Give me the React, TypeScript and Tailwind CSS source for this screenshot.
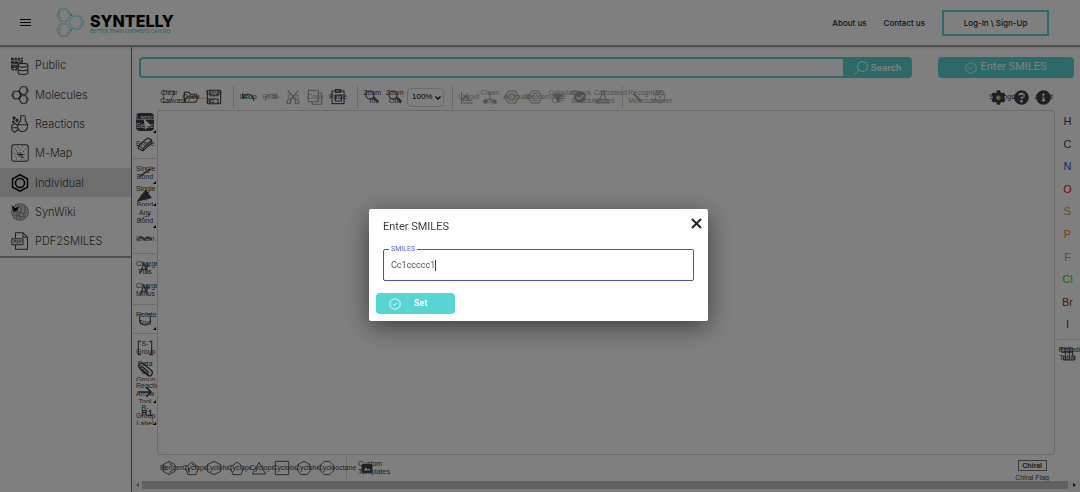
import { useState } from "react";
import type { ReactNode } from "react";
import { FaCheckCircle, FaCog, FaInfoCircle, FaQuestionCircle } from "react-icons/fa";

type ToolItem = {
    label: string;
    icon: ReactNode;
    disabled?: boolean;
    active?: boolean;
    more?: boolean;
    tall?: boolean;
};

function Svg({ children, className = "size-4" }: { children: ReactNode; className?: string }) {
    return (
        <svg viewBox="0 0 24 24" fill="none" stroke="currentColor" strokeWidth="1.6" className={className} aria-hidden="true">
            {children}
        </svg>
    );
}

const undoPath = <path d="M4 6v7h7M4 13c3-7 14-8 17 5" />;

const zoomIcon = (
    <Svg>
        <circle cx="9" cy="9" r="6" />
        <path d="M13 13l8 8M15 12l7 7" />
    </Svg>
);

const chargeIcon = (
    <Svg>
        <path d="M5 20L10 5l4 10M7 14h6M15 4v16M11 9h9" />
    </Svg>
);

const FILE_TOOLS: ToolItem[] = [
    { label: "Clear Canvas", icon: <Svg><path d="M4 3h16v4l-5 8v6M4 3v17h9" strokeWidth="1" /></Svg> },
    { label: "Open…", icon: <Svg><path d="M2 20V5h7l2 3h9v4M2 20l4-8h17l-4 8z" /></Svg> },
    { label: "Save As…", icon: <Svg><rect x="2" y="2" width="20" height="20" rx="1" /><path d="M6 2v8h12V2M6 22v-7h12v7" /></Svg> },
];

const EDIT_TOOLS: ToolItem[] = [
    { label: "Undo", icon: <Svg>{undoPath}</Svg> },
    { label: "Redo", disabled: true, icon: <Svg className="size-4 -scale-x-100">{undoPath}</Svg> },
    { label: "Cut", disabled: true, icon: <Svg><circle cx="6" cy="19" r="3" /><circle cx="18" cy="19" r="3" /><path d="M4 2l12 15M20 2L8 17" /></Svg> },
    { label: "Copy", disabled: true, icon: <Svg><rect x="2" y="2" width="15" height="17" /><path d="M8 19v4h14V6h-5" /></Svg> },
    { label: "Paste", icon: <Svg><rect x="3" y="3" width="18" height="19" /><rect x="8" y="1" width="8" height="4" /><path d="M8 9h9v9H8z" /></Svg> },
];

const ZOOM_TOOLS: ToolItem[] = [
    { label: "Zoom In", icon: zoomIcon },
    { label: "Zoom Out", icon: zoomIcon },
];

const STRUCTURE_TOOLS: ToolItem[] = [
    { label: "Layout", disabled: true, icon: <Svg><path d="M4 4v17h17M4 17l7-7 4 6M12 12V6M4 17h16" /></Svg> },
    { label: "Clean Up", disabled: true, icon: <Svg><path d="M12 5v9l-7 5M12 14l7 5" /><circle cx="5" cy="19" r="2.5" fill="currentColor" /><circle cx="19" cy="19" r="2.5" fill="currentColor" /></Svg> },
    { label: "Aromatize", disabled: true, icon: <Svg><path d="M7 3h10l6 9-6 9H7l-6-9z" /><circle cx="12" cy="12" r="5" /></Svg> },
    { label: "Dearomatize", disabled: true, icon: <Svg><path d="M7 3h10l6 9-6 9H7l-6-9zM8 7h8M8 17h8" /></Svg> },
    { label: "Calculate CIP", disabled: true, icon: <Svg><path d="M4 5l8 13 8-13" /><path d="M8 8l4 11 4-11z" fill="currentColor" /></Svg> },
    { label: "Check Structure", disabled: true, icon: <FaCheckCircle className="size-3" /> },
    { label: "Calculated Values", disabled: true, icon: <Svg><path d="M8 3h8M10 3v7L3 21h18l-7-11V3M7 16h10" /></Svg> },
];

const VIEW_TOOLS: ToolItem[] = [
    { label: "Recognize Molecule", disabled: true, icon: <Svg><path d="M7 7l11 12" strokeWidth="3" /></Svg> },
    { label: "3D Viewer", disabled: true, icon: <Svg><path d="M12 3l7 5v9l-7 4-7-4V8zM12 12v9M5 8l7 4 7-4" strokeWidth="1" /></Svg> },
];

const LEFT_GROUPS: ToolItem[][] = [
    [
        { label: "Lasso Selection", active: true, more: true, icon: <Svg><path d="M11 9l9 8-5 1-2 4z" fill="currentColor" /></Svg> },
        { label: "Erase", icon: <Svg><path d="M2 15L16 3l6 3L9 19zM9 19v3l13-12V6M2 15v4l7 3" /></Svg> },
    ],
    [
        { label: "Single Bond", more: true, icon: <Svg><path d="M4 17L20 6" strokeWidth="2" /></Svg> },
        { label: "Single Up Bond", more: true, tall: true, icon: <Svg><path d="M1 21L13 5l8 11z" fill="currentColor" /></Svg> },
        { label: "Any Bond", more: true, icon: <Svg><path d="M4 17L20 7" strokeDasharray="3 2" /></Svg> },
        { label: "Chain", icon: <Svg><path d="M1 13l5-4 5 4 5-4 6 4" strokeWidth="2" /></Svg> },
    ],
    [
        { label: "Charge Plus", icon: chargeIcon },
        { label: "Charge Minus", icon: chargeIcon },
    ],
    [
        { label: "Rotate Tool", more: true, icon: <Svg><path d="M4 8v9l6 4h4l6-4V8M4 5h5M15 5h5" /></Svg> },
    ],
    [
        { label: "S-Group", icon: <Svg><path d="M6 2H2v20h4M18 2h4v20h-4" /></Svg> },
        { label: "Data S-Group", tall: true, icon: <Svg><path d="M18 20L4 9c-4-5 2-10 6-6l12 10c3 5-2 10-6 7L6 12c-3-4 1-6 3-4l9 8" strokeWidth="2" /></Svg> },
        { label: "Reaction Arrow Tool", more: true, tall: true, icon: <Svg><path d="M2 12h19M14 5l7 7-7 7" strokeWidth="2.4" /></Svg> },
        { label: "R-Group Label Tool", more: true, tall: true, icon: <span className="pl-1 text-[9px] font-bold">R1</span> },
    ],
];

const TEMPLATES: ToolItem[] = [
    { label: "Benzene", icon: <Svg><path d="M12 2l9 5v10l-9 5-9-5V7zM6 8v8M12 5l6 4M12 19l6-4" strokeWidth="1.3" /></Svg> },
    { label: "Cyclopentadiene", icon: <Svg><path d="M12 3l10 8-4 11H6L2 11zM12 6l6 5M6 12l2 7" strokeWidth="1.3" /></Svg> },
    { label: "Cyclohexane", icon: <Svg><path d="M12 2l10 5v10l-10 5-10-5V7z" strokeWidth="1.3" /></Svg> },
    { label: "Cyclopentane", icon: <Svg><path d="M12 3l10 8-4 11H6L2 11z" strokeWidth="1.3" /></Svg> },
    { label: "Cyclopropane", icon: <Svg><path d="M12 4l10 17H2z" strokeWidth="1.3" /></Svg> },
    { label: "Cyclobutane", icon: <Svg><path d="M2 2h20v20H2z" strokeWidth="1.3" /></Svg> },
    { label: "Cycloheptane", icon: <Svg><path d="M12 2l8 4 2 9-5 7H7l-5-7 2-9z" strokeWidth="1.3" /></Svg> },
    { label: "Cyclooctane", icon: <Svg><path d="M8 2h8l6 6v8l-6 6H8l-6-6V8z" strokeWidth="1.3" /></Svg> },
];

const ATOMS = [
    { symbol: "H", color: "text-neutral-700" },
    { symbol: "C", color: "text-neutral-700" },
    { symbol: "N", color: "text-[#304ff7]" },
    { symbol: "O", color: "text-[#ff0d0d]" },
    { symbol: "S", color: "text-[#c99a19]" },
    { symbol: "P", color: "text-[#ff8000]" },
    { symbol: "F", color: "text-[#78bc42]" },
    { symbol: "Cl", color: "text-[#1fd01f]" },
    { symbol: "Br", color: "text-[#a62929]" },
    { symbol: "I", color: "text-[#940094]" },
];

const NAV = [
    {
        label: "Public",
        icon: (
            <>
                <path d="M1 2h14v5H1zM1 7h8v5H1zM1 12h7v5H1z" strokeDasharray="3 1" strokeWidth="2" />
                <path d="M2 4h12M2 9h6M2 14h5" strokeWidth="1.5" />
                <ellipse cx="16" cy="11" rx="6.500" ry="2.500" />
                <path d="M9.500 11v10c0 3 13 3 13 0V11M9.500 16c0 3 13 3 13 0" />
            </>
        ),
    },
    {
        label: "Molecules",
        icon: (
            <>
                <path d="M4 7h6l3 5-3 5H4l-3-5zM14 1h6l3 5-3 5h-6l-3-5zM14 13h6l3 5-3 5h-6l-3-5z" />
                <path d="M4 9l-1 3 1 3M20 3l1 3-1 3M20 15l1 3-1 3" strokeWidth="1" />
            </>
        ),
    },
    {
        label: "Reactions",
        icon: (
            <>
                <path d="M12 1h7M13 2v6c-7 5-4 14 2 14 8 0 9-10 4-14V2M10 13h12M1 14l4-3 4 3v6l-4 3-4-3zM2 17h6" />
                <circle cx="4" cy="4" r="1.500" fill="currentColor" />
                <circle cx="8" cy="7" r="1.500" fill="currentColor" />
                <circle cx="3" cy="9" r="1" fill="currentColor" />
            </>
        ),
    },
    {
        label: "M-Map",
        icon: (
            <>
                <rect x="1" y="1" width="22" height="22" rx="3" />
                <path d="M5 6h1M9 5h1M15 4h1M19 7h1M7 9h1M12 8h1M16 10h1M4 13h1M8 12h2M11 12h3M8 14h5M10 16h6M12 14h5M14 18h3M6 17h1M18 14h1M7 20h1M17 20h1M13 20h1" strokeWidth="1.5" />
            </>
        ),
    },
    {
        label: "Individual",
        active: true,
        icon: (
            <g className="text-black">
                <path d="M12 1l10 5.500v11L12 23 2 17.500v-11z" stroke="currentColor" strokeWidth="2" />
                <circle cx="12" cy="12" r="6" stroke="currentColor" strokeWidth="2" />
            </g>
        ),
    },
    {
        label: "SynWiki",
        icon: (
            <g className="text-neutral-500">
                <circle cx="12" cy="12" r="11" fill="#ccc" stroke="currentColor" strokeDasharray="3 1" />
                <path d="M5 13c4-5 11 5 15-1M4 17c5-4 9 5 15 0M10 3c9 5-3 10 3 19M17 4c5 6-3 9 1 15M7 9c5 3-2 7 1 12" stroke="currentColor" strokeWidth="1" />
                <path d="M2 5l4 3 4-3-2 4-4 2z" fill="#111" stroke="#111" />
            </g>
        ),
    },
    {
        label: "PDF2SMILES",
        icon: (
            <>
                <path d="M6 8V1h10l6 6v16H6v-6M16 1v6h6" />
                <rect x="1" y="9" width="15" height="8" rx="1" />
                <path d="M4 15v-4h2v2H4M8 11v4c3 0 3-4 0-4M12 15v-4h2M12 13h2" strokeWidth="1" />
            </>
        ),
    },
];

function HexCheck({ className }: { className: string }) {
    return (
        <svg viewBox="0 0 24 24" fill="none" stroke="currentColor" strokeWidth="1.6" className={className} aria-hidden="true">
            <path d="M12 1l8 4q2 1 2 3v8q0 2-2 3l-8 4-8-4q-2-1-2-3V8q0-2 2-3zM8 12l3 3 5-6" />
        </svg>
    );
}

function Tool({ item, clip }: { item: ToolItem; clip?: boolean }) {
    let tone = "text-neutral-700";
    if (item.disabled) tone = "text-neutral-400";
    if (item.active) tone = "text-white";

    let labelBox = "w-[18px] text-center";
    if (clip) labelBox = "w-[23px] shrink-0 overflow-clip text-left";
    if (item.active) labelBox = "h-4 w-[18px] overflow-clip text-center";

    return (
        <button
            type="button"
            disabled={item.disabled}
            className={`relative flex h-[22px] min-w-0 flex-1 shrink-0 items-center justify-center overflow-y-clip font-['Liberation_Sans',sans-serif] ${tone}`}
        >
            <span className={`flex size-[18px] items-center justify-center rounded-sm ${item.active ? "bg-neutral-700" : ""}`}>
                {item.icon}
            </span>
            <span className={`absolute inset-0 flex ${item.tall ? "items-start pt-px" : "items-center"} ${clip ? "justify-start pl-0.5" : "justify-center"}`}>
                <span className={`text-[7px] leading-[8px] ${labelBox}`}>{item.label}</span>
            </span>
            {item.more && (
                <svg viewBox="0 0 4 4" className="absolute right-0 bottom-0 size-[3px] text-black" aria-hidden="true">
                    <path d="M4 0v4H0z" fill="currentColor" />
                </svg>
            )}
        </button>
    );
}

function Divider() {
    return <div className="mr-[3px] ml-2 h-[22px] w-px bg-neutral-300" />;
}

function Header() {
    return (
        <header className="relative flex h-[47px] shrink-0 items-center border-b-2 border-neutral-400 pr-[31px] pl-5 font-[Inter,sans-serif] shadow">
            <button type="button" aria-label="Menu" className="mr-[25px]">
                <svg viewBox="0 0 11 8" className="h-2 w-[11px]" shapeRendering="crispEdges">
                    <path d="M0 .5h11M0 3.500h11M0 6.500h11" stroke="#111" />
                </svg>
            </button>
            <a href="#" className="flex items-center gap-[5px]">
                <svg viewBox="0 0 29 30" fill="none" stroke="#58d5d3" className="h-[30px] w-[29px]">
                    <path d="M4 1h7l4 6-4 6H4L1 7zM4 16h7l4 6-4 6H4l-3-6zM17 8h7l4 6-4 7h-7l-4-7z" strokeWidth=".8" />
                    <path d="M4 3L3 7l2 4M11 3l2 4M4 26l-1-4 2-4M11 26l2-4M24 10l2 4-3 5" strokeWidth=".6" />
                    <circle cx="15" cy="7" r=".8" fill="#58d5d3" />
                    <circle cx="15" cy="22" r=".8" fill="#58d5d3" />
                </svg>
                <span className="flex flex-col pt-px">
                    <span className="text-[16px] leading-4 font-extrabold text-black">SYNTELLY</span>
                    <span className="font-[Lato,sans-serif] text-[5px] leading-[5px] font-bold text-[#58d5d3]">BETTER THAN CHEMISTS CAN DO</span>
                </span>
            </a>
            <nav className="ml-auto flex items-center gap-[17px] text-[8px] font-medium text-neutral-800">
                <a href="#">About us</a>
                <a href="#">Contact us</a>
                <button type="button" className="h-[26px] w-[107px] border-2 border-[#58d5d3] font-medium">
                    Log-In \ Sign-Up
                </button>
            </nav>
        </header>
    );
}

function Sidebar() {
    return (
        <aside className="w-[132px] shrink-0 border-r border-neutral-500">
            <nav className="flex h-[211px] flex-col border-b-2 border-neutral-400 pt-1 font-[Inter,sans-serif]">
                {NAV.map((item) => (
                    <a
                        key={item.label}
                        href="#"
                        className={`flex flex-1 items-center gap-1.5 pl-[11px] text-[11px] font-light text-neutral-700 ${item.active ? "bg-[#dcdcdc]" : ""}`}
                    >
                        <svg viewBox="0 0 24 24" fill="none" stroke="currentColor" strokeWidth="1.4" className="size-[18px]" aria-hidden="true">
                            {item.icon}
                        </svg>
                        {item.label}
                    </a>
                ))}
            </nav>
        </aside>
    );
}

function SearchRow({ onOpen }: { onOpen: () => void }) {
    return (
        <div className="flex h-[21px] gap-[26px] pr-1.5 pl-[7px]">
            <form className="flex flex-1" onSubmit={(e) => e.preventDefault()}>
                <input
                    type="text"
                    aria-label="Search"
                    className="min-w-0 flex-1 rounded-l-sm border-2 border-r-0 border-[#58d5d3] px-2 text-[10px] outline-none"
                />
                <button
                    type="submit"
                    className="flex w-[69px] items-center justify-center gap-[3px] rounded-r-sm bg-[#58d5d3] font-[Inter,sans-serif] text-[9px] font-semibold text-white"
                >
                    <svg viewBox="0 0 14 14" fill="none" stroke="currentColor" className="size-3.5" aria-hidden="true">
                        <circle cx="8.500" cy="5.500" r="5" />
                        <path d="M5 9l-4.500 4.500" />
                    </svg>
                    Search
                </button>
            </form>
            <button
                type="button"
                onClick={onOpen}
                className="flex w-[136px] items-center justify-center gap-[3px] rounded-sm bg-[#58d5d3] font-[Roboto,sans-serif] text-[11px] text-white"
            >
                <HexCheck className="size-3" />
                Enter SMILES
            </button>
        </div>
    );
}

function TopToolbar() {
    return (
        <div className="flex h-8 items-center pt-1.5 pl-[26px]">
            <div className="flex w-[67px]">{FILE_TOOLS.map((t) => <Tool key={t.label} item={t} />)}</div>
            <Divider />
            <div className="flex w-[112px]">{EDIT_TOOLS.map((t) => <Tool key={t.label} item={t} />)}</div>
            <Divider />
            <div className="flex w-[45px]">{ZOOM_TOOLS.map((t) => <Tool key={t.label} item={t} />)}</div>
            <div className="relative ml-px">
                <select
                    aria-label="Zoom"
                    defaultValue="100%"
                    className="block h-[19px] w-[37px] appearance-none rounded-sm border border-neutral-300 bg-white pl-1 font-['Liberation_Sans',sans-serif] text-[8px] text-black"
                >
                    <option>50%</option>
                    <option>100%</option>
                    <option>200%</option>
                </select>
                <svg viewBox="0 0 6 4" className="pointer-events-none absolute top-2 right-[3px] h-1 w-1.5" fill="none" stroke="#111" strokeWidth="1.4" aria-hidden="true">
                    <path d="M.5 .5L3 3 5.500 .5" />
                </svg>
            </div>
            <Divider />
            <div className="flex w-[158px]">{STRUCTURE_TOOLS.map((t) => <Tool key={t.label} item={t} />)}</div>
            <Divider />
            <div className="flex w-[45px]">{VIEW_TOOLS.map((t) => <Tool key={t.label} item={t} />)}</div>
            <div className="mr-[25px] ml-auto flex w-[68px]">
                <Tool item={{ label: "Settings", icon: <FaCog className="size-[15px]" /> }} />
                <Tool item={{ label: "Help", icon: <FaQuestionCircle className="size-[15px]" /> }} />
                <Tool item={{ label: "About", icon: <FaInfoCircle className="size-[15px]" /> }} />
            </div>
        </div>
    );
}

function LeftToolbar() {
    return (
        <div className="flex w-[25px] shrink-0 flex-col pt-px pr-px pl-0.5">
            {LEFT_GROUPS.map((group, i) => (
                <div key={i} className="flex flex-col">
                    {i > 0 && <div className="my-[3px] h-px bg-neutral-300" />}
                    {group.map((t) => (
                        <div key={t.label} className="flex">
                            <Tool item={t} />
                        </div>
                    ))}
                </div>
            ))}
        </div>
    );
}

function AtomBar() {
    return (
        <div className="flex w-[25px] shrink-0 flex-col overflow-x-clip">
            <div className="flex h-[226px] flex-col font-['Liberation_Sans',sans-serif] text-[11px]">
                {ATOMS.map((a) => (
                    <button key={a.symbol} type="button" className={`flex-1 ${a.color}`}>
                        {a.symbol}
                    </button>
                ))}
            </div>
            <div className="my-[3px] ml-0.5 h-px bg-neutral-300" />
            <div className="flex">
                <Tool item={{ label: "Periodic Table", icon: <Svg><path d="M2 3h17v6H2zM8 3v17M14 3v17M2 9h17v6h3v6H5v-6" strokeWidth="1.4" /></Svg> }} />
            </div>
        </div>
    );
}

function BottomToolbar() {
    return (
        <div className="flex h-[26px] shrink-0 items-start overflow-hidden pt-0.5 pr-[25px] pl-[26px]">
            <div className="flex w-[180px]">
                {TEMPLATES.map((t) => <Tool key={t.label} item={t} clip={t.label !== "Cyclooctane"} />)}
            </div>
            <Divider />
            <div className="ml-1.5 flex w-[22px]">
                <Tool
                    item={{
                        label: "Custom Templates",
                        icon: <Svg className="size-3"><path d="M2 5h20v16H2z" fill="currentColor" /><path d="M5 18l5-7 4 5 2-3 4 5z" fill="#fff" stroke="none" /></Svg>,
                    }}
                />
            </div>
            <button type="button" className="mr-1.5 ml-auto flex flex-col items-center pt-[3px] font-['Liberation_Sans',sans-serif] text-[7px] text-neutral-700">
                <span className="w-[29px] border border-neutral-500 leading-[9px] font-bold">Chiral</span>
                <span className="pt-[3px] leading-[8px]">Chiral Flag</span>
            </button>
        </div>
    );
}

function ScrollTrack() {
    return (
        <div className="flex h-[11px] shrink-0 items-start justify-between gap-[3px] bg-neutral-100 px-1">
            <svg viewBox="0 0 3 8" className="h-2 w-[3px]" aria-hidden="true">
                <path d="M3 2v4L0 4z" fill="#888" />
            </svg>
            <div className="h-2 flex-1 bg-[#c1c1c1]" />
            <svg viewBox="0 0 3 8" className="ml-0.5 h-2 w-[3px]" aria-hidden="true">
                <path d="M0 2v4l3-2z" fill="#222" />
            </svg>
        </div>
    );
}

function SmilesDialog({ onClose }: { onClose: () => void }) {
    const [smiles, setSmiles] = useState("Cc1ccccc1");

    return (
        <div className="fixed inset-0 z-10 flex items-center justify-center bg-black/50 pt-[38px] pr-[3px]">
            <div
                role="dialog"
                aria-labelledby="smiles-title"
                className="relative w-full max-w-[339px] rounded-xs bg-white px-[7px] pt-2.5 pb-[7px] font-[Roboto,sans-serif] shadow-[0_6px_24px_rgba(0,0,0,0.5)]"
            >
                <h2 id="smiles-title" className="pl-[7px] text-[11px] leading-4 text-neutral-700">
                    Enter SMILES
                </h2>
                <button type="button" aria-label="Close" onClick={onClose} className="absolute top-[9px] right-1.5">
                    <svg viewBox="0 0 11 11" className="size-[11px]" stroke="#222" strokeWidth="2">
                        <path d="M1 1l9 9M10 1l-9 9" />
                    </svg>
                </button>
                <fieldset className="mx-[7px] mt-2.5 h-9 rounded-xs border border-[#4655bb] px-[7px]">
                    <legend className="-ml-0.5 px-0.5 text-[7px] leading-[9px] text-[#5460bd]">
                        <label htmlFor="smiles">SMILES</label>
                    </legend>
                    <div className="relative flex">
                        <input
                            id="smiles"
                            value={smiles}
                            onChange={(e) => setSmiles(e.target.value)}
                            className="h-[22px] w-full text-[9px] text-neutral-600 caret-transparent outline-none"
                        />
                        <span className="absolute top-1.5 left-11 h-[11px] w-px bg-neutral-700" />
                    </div>
                </fieldset>
                <button
                    type="button"
                    onClick={onClose}
                    className="mt-3 flex h-[21px] w-[79px] items-center gap-[13px] rounded-sm bg-[#58d5d3] pl-[13px] text-[9px] font-bold text-white"
                >
                    <HexCheck className="size-3" />
                    Set
                </button>
            </div>
        </div>
    );
}

export default function App() {
    const [open, setOpen] = useState(true);

    return (
        <div className="flex min-h-screen flex-col bg-white">
            <Header />
            <div className="flex flex-1">
                <Sidebar />
                <main className="flex min-w-0 flex-1 flex-col pt-2.5">
                    <SearchRow onOpen={() => setOpen(true)} />
                    <TopToolbar />
                    <div className="flex flex-1">
                        <LeftToolbar />
                        <div className="relative flex-1 rounded-sm border border-neutral-300 bg-white" />
                        <AtomBar />
                    </div>
                    <BottomToolbar />
                    <ScrollTrack />
                </main>
            </div>
            {open && <SmilesDialog onClose={() => setOpen(false)} />}
        </div>
    );
}
